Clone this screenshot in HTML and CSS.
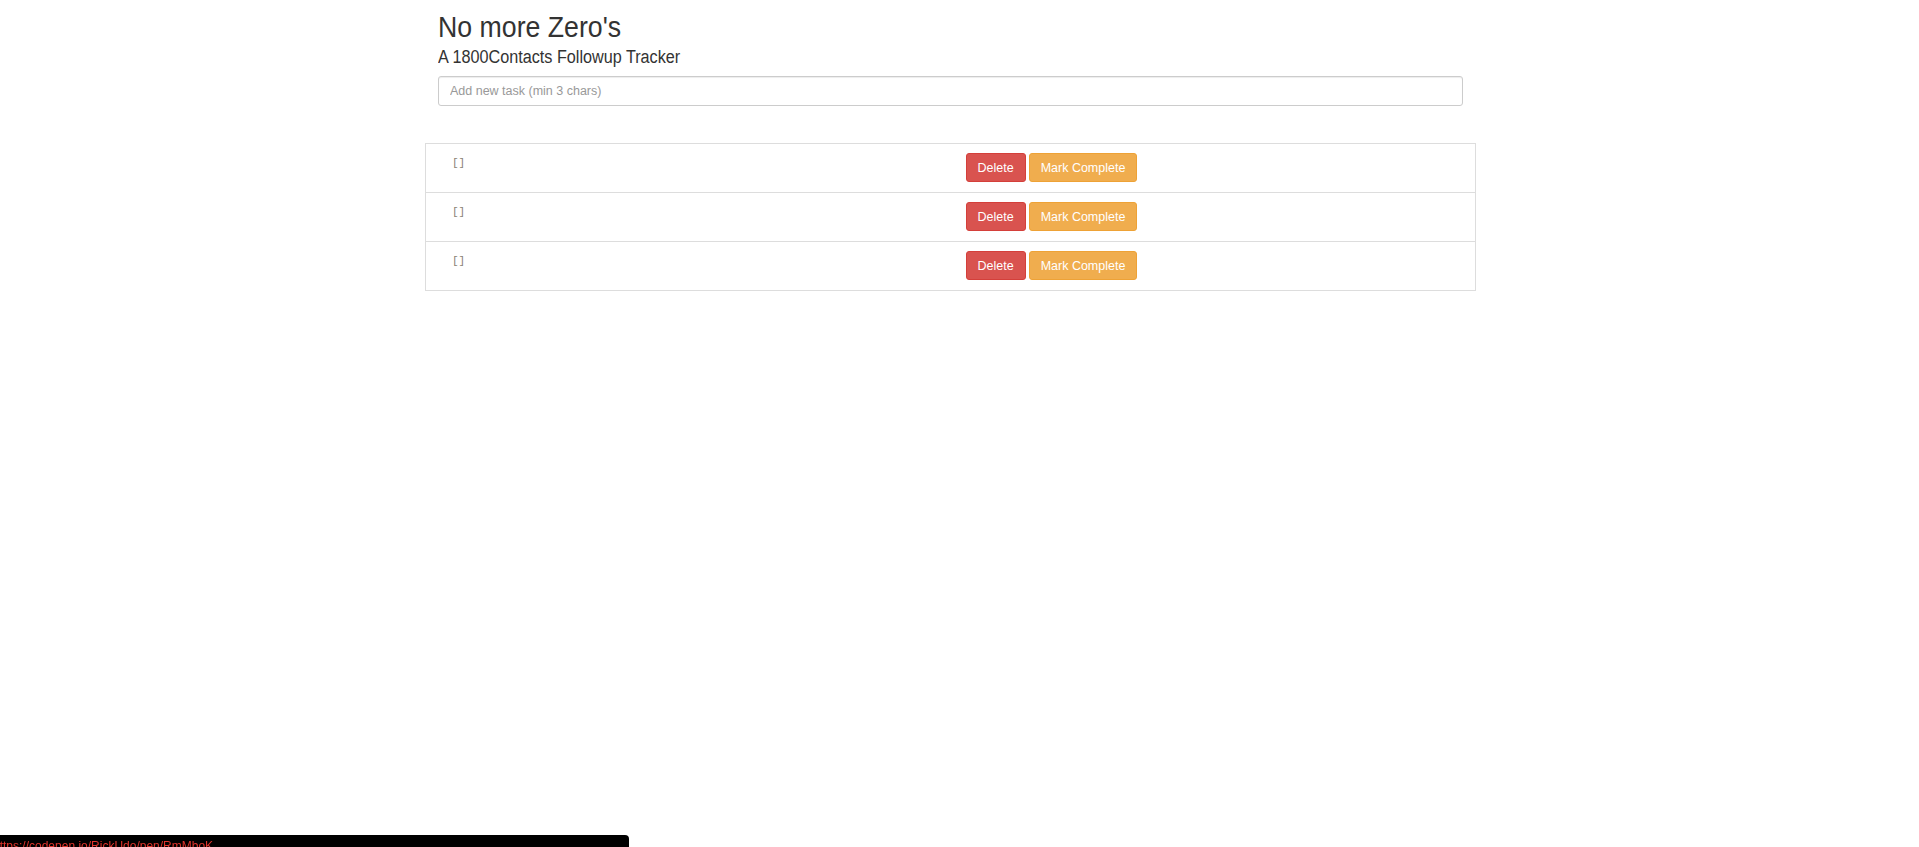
FILE: index.html
```html
<!DOCTYPE html>
<html lang="en">
<head>
<meta charset="utf-8">
<title>No more Zero's</title>
<link rel="stylesheet" href="styles.css">
</head>
<body>
<div class="page">
  <header class="header">
    <h1 class="title">No more Zero's</h1>
    <h2 class="subtitle">A 1800Contacts Followup Tracker</h2>
    <input class="task-input" type="text" placeholder="Add new task (min 3 chars)">
  </header>
  <ul class="task-list">
    <li class="task">
      <div class="task-text"><code class="task-code">[]</code></div>
      <div class="task-actions">
        <button class="btn btn-delete">Delete</button>
        <button class="btn btn-complete">Mark Complete</button>
      </div>
    </li>
    <li class="task">
      <div class="task-text"><code class="task-code">[]</code></div>
      <div class="task-actions">
        <button class="btn btn-delete">Delete</button>
        <button class="btn btn-complete">Mark Complete</button>
      </div>
    </li>
    <li class="task">
      <div class="task-text"><code class="task-code">[]</code></div>
      <div class="task-actions">
        <button class="btn btn-delete">Delete</button>
        <button class="btn btn-complete">Mark Complete</button>
      </div>
    </li>
  </ul>
</div>
<div class="status-bar"><span class="status-url">https://codepen.io/RickUdo/pen/RmMboK</span></div>
</body>
</html>
```
FILE: styles.css
```css
html, body {
  margin: 0;
  padding: 0;
  background: #fff;
}

body {
  font-family: "Liberation Sans", Arial, Helvetica, sans-serif;
  color: #333;
}

.page {
  width: 1051px;
  margin-left: 425px;
  padding-top: 10px;
}

.header {
  padding: 0 13px;
}

.title {
  margin: 0;
  font-family: "Liberation Sans", Arial, sans-serif;
  font-weight: 400;
  font-size: 30px;
  line-height: 33px;
  color: #333;
  transform: scaleX(0.89);
  transform-origin: left center;
}

.subtitle {
  margin: 4px 0 0;
  font-family: "Liberation Sans", Arial, sans-serif;
  font-weight: 400;
  font-size: 18px;
  line-height: 20px;
  color: #333;
  transform: scaleX(0.9);
  transform-origin: left center;
}

.task-input {
  display: block;
  box-sizing: border-box;
  width: 100%;
  height: 30px;
  margin: 9px 0 0;
  padding: 5px 11px;
  font-family: "Liberation Sans", Arial, sans-serif;
  font-size: 12.5px;
  color: #555;
  background: #fff;
  border: 1px solid #ccc;
  border-radius: 3px;
  box-shadow: inset 0 1px 1px rgba(0, 0, 0, 0.075);
  outline: none;
}

.task-input::placeholder {
  color: #999;
}

.task-list {
  list-style: none;
  margin: 37px 0 0;
  padding: 0;
}

.task {
  display: grid;
  grid-template-columns: 1fr 1fr;
  column-gap: 30px;
  padding: 9px 15px 10px;
  border: 1px solid #ddd;
  background: #fff;
}

.task + .task {
  border-top: 0;
}

.task-text {
  padding: 4px 0 0 11px;
}

.task-code {
  display: block;
  font-family: "Liberation Mono", "DejaVu Sans Mono", monospace;
  font-size: 11px;
  line-height: 12px;
  color: #8a8275;
}

.task-actions {
  display: flex;
  gap: 3px;
  align-items: flex-start;
}

.btn {
  box-sizing: border-box;
  height: 29px;
  padding: 0 11px;
  font-family: "Liberation Sans", Arial, sans-serif;
  font-size: 12.5px;
  color: #fff;
  border: 1px solid transparent;
  border-radius: 3px;
  cursor: pointer;
}

.btn-delete {
  background: #d9534f;
  border-color: #d43f3a;
}

.btn-complete {
  background: #f0ad4e;
  border-color: #eea236;
}

.status-bar {
  position: fixed;
  left: 0;
  bottom: 0;
  width: 629px;
  height: 12px;
  overflow: hidden;
  background: #000;
  border-top-right-radius: 4px;
}

.status-url {
  display: block;
  margin: 4px 0 0 -7px;
  font-family: "Liberation Sans", Arial, sans-serif;
  font-size: 12px;
  line-height: 14px;
  color: #e0342c;
  white-space: nowrap;
}
```
